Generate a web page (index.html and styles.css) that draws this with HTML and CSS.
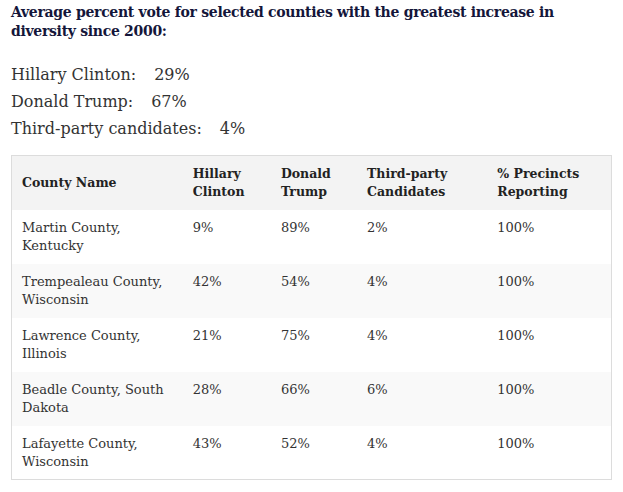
FILE: index.html
```html
<!DOCTYPE html>
<html>
<head>
<meta charset="utf-8">
<link rel="stylesheet" href="styles.css">
</head>
<body>
<div class="page">
  <h2 class="title">Average percent vote for selected counties with the greatest increase in diversity since 2000:</h2>
  <ul class="summary">
    <li>Hillary Clinton:<span class="pct">29%</span></li>
    <li>Donald Trump:<span class="pct">67%</span></li>
    <li>Third-party candidates:<span class="pct">4%</span></li>
  </ul>
  <table class="results">
    <colgroup>
      <col class="c1"><col class="c2"><col class="c3"><col class="c4"><col class="c5">
    </colgroup>
    <thead>
      <tr>
        <th>County Name</th>
        <th>Hillary Clinton</th>
        <th>Donald Trump</th>
        <th>Third-party Candidates</th>
        <th>% Precincts Reporting</th>
      </tr>
    </thead>
    <tbody>
      <tr><td>Martin County, Kentucky</td><td>9%</td><td>89%</td><td>2%</td><td>100%</td></tr>
      <tr><td>Trempealeau County, Wisconsin</td><td>42%</td><td>54%</td><td>4%</td><td>100%</td></tr>
      <tr><td>Lawrence County, Illinois</td><td>21%</td><td>75%</td><td>4%</td><td>100%</td></tr>
      <tr><td>Beadle County, South Dakota</td><td>28%</td><td>66%</td><td>6%</td><td>100%</td></tr>
      <tr><td>Lafayette County, Wisconsin</td><td>43%</td><td>52%</td><td>4%</td><td>100%</td></tr>
    </tbody>
  </table>
</div>
</body>
</html>
```
FILE: styles.css
```css
html, body {
  margin: 0;
  padding: 0;
  background: #fff;
}
.page {
  padding: 3px 12px 0 11px;
  font-family: "DejaVu Serif", "Liberation Serif", serif;
}
.title {
  margin: 0;
  font-size: 14px;
  line-height: 19px;
  font-weight: bold;
  color: #14163a;
  letter-spacing: -0.3px;
}
.summary {
  list-style: none;
  margin: 20px 0 0 0;
  padding: 0;
  font-size: 16px;
  line-height: 27px;
  color: #333;
}
.pct {
  margin-left: 18px;
}
.results {
  margin-top: 13px;
  width: 601px;
  border-collapse: collapse;
  table-layout: fixed;
  border: 1px solid #dcdcdc;
  font-size: 13px;
  line-height: 18px;
  color: #333;
}
.c1 { width: 171px; }
.c2 { width: 88px; }
.c3 { width: 86px; }
.c4 { width: 130px; }
.c5 { width: 124px; }
.results th {
  background: #f3f3f3;
  text-align: left;
  vertical-align: middle;
  font-size: 12.5px;
  font-weight: bold;
  color: #222;
  height: 54px;
  padding: 0 10px;
  box-sizing: border-box;
}
.results td {
  vertical-align: top;
  padding: 9px 10px 8px 10px;
  height: 54px;
  box-sizing: border-box;
}
.results tbody tr:nth-child(even) td {
  background: #f9f9f9;
}
```
